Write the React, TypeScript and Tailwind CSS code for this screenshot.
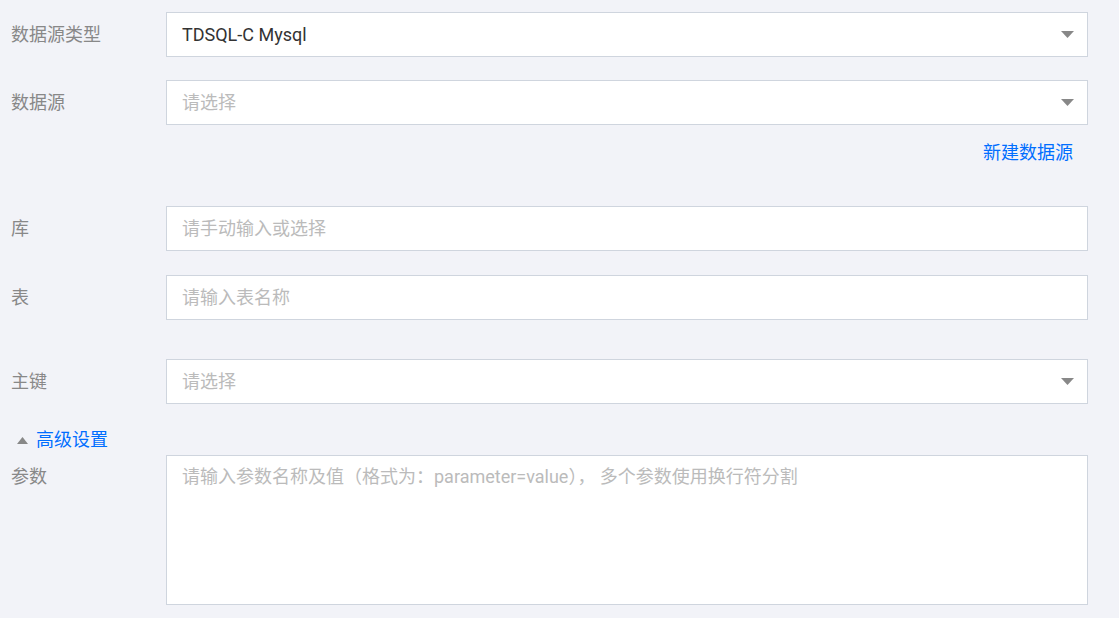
const font = { fontFamily: 'Roboto, "Noto Sans CJK SC", sans-serif' }

function Caret({ up }: { up?: boolean }) {
  return up ? (
    <svg width="11" height="7" viewBox="0 0 11 7" className="shrink-0">
      <path d="M5.5 0L11 7H0z" fill="#888" />
    </svg>
  ) : (
    <svg width="13" height="7" viewBox="0 0 13 7" className="shrink-0">
      <path d="M0 0h13L6.5 7z" fill="#888" />
    </svg>
  )
}

function Row({ label, children, top }: { label: string; children: React.ReactNode; top?: boolean }) {
  return (
    <div className={`flex ${top ? 'items-start' : 'items-center'}`}>
      <div className={`w-[155px] shrink-0 text-[18px] leading-6 text-[#888] ${top ? 'pt-[10px]' : ''}`}>{label}</div>
      <div className="w-[922px]">{children}</div>
    </div>
  )
}

function Select({ value, placeholder }: { value?: string; placeholder?: string }) {
  return (
    <div className="flex h-[45px] items-center justify-between border border-[#cfd5de] bg-white pl-[15px] pr-[13px]">
      <span className={`text-[18px] leading-6 ${value ? 'text-[#333]' : 'text-[#bbb]'}`}>{value ?? placeholder}</span>
      <Caret />
    </div>
  )
}

function Input({ placeholder }: { placeholder: string }) {
  return (
    <div className="flex h-[45px] items-center border border-[#cfd5de] bg-white pl-[15px]">
      <span className="text-[18px] leading-6 text-[#bbb]">{placeholder}</span>
    </div>
  )
}

export default function App() {
  return (
    <div className="min-h-[618px] bg-[#f2f3f8] pl-[11px] pt-[12px]" style={font}>
      <Row label="数据源类型">
        <Select value="TDSQL-C Mysql" />
      </Row>
      <div className="mt-[23px]">
        <Row label="数据源">
          <Select placeholder="请选择" />
        </Row>
      </div>
      <div className="mt-[16px] flex w-[1077px] justify-end pr-[15px]">
        <span className="text-[18px] leading-6 text-[#006eff]">新建数据源</span>
      </div>
      <div className="mt-[41px]">
        <Row label="库">
          <Input placeholder="请手动输入或选择" />
        </Row>
      </div>
      <div className="mt-[24px]">
        <Row label="表">
          <Input placeholder="请输入表名称" />
        </Row>
      </div>
      <div className="mt-[39px]">
        <Row label="主键">
          <Select placeholder="请选择" />
        </Row>
      </div>
      <div className="mt-[24px] flex items-center gap-[8px] pl-[6px]">
        <Caret up />
        <span className="text-[18px] leading-6 text-[#006eff]">高级设置</span>
      </div>
      <div className="mt-[3px]">
        <Row label="参数" top>
          <div className="h-[150px] border border-[#cfd5de] bg-white pl-[15px] pt-[9px]">
            <span className="text-[18px] leading-6 text-[#bbb]">
              请输入参数名称及值（格式为：parameter=value）， 多个参数使用换行符分割
            </span>
          </div>
        </Row>
      </div>
    </div>
  )
}
